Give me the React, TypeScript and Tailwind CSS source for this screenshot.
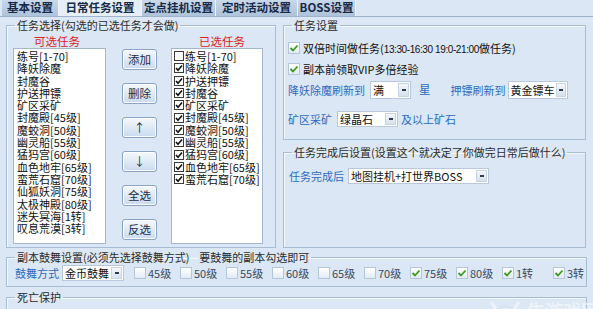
import type { FC, ReactNode } from "react";

const available = [
  "练号[1-70]",
  "降妖除魔",
  "封魔谷",
  "护送押镖",
  "矿区采矿",
  "封魔殿[45级]",
  "魔蛟洞[50级]",
  "幽灵船[55级]",
  "猛犸宫[60级]",
  "血色地牢[65级]",
  "蛮荒石窟[70级]",
  "仙狐妖洞[75级]",
  "太极神殿[80级]",
  "迷失冥海[1转]",
  "叹息荒漠[3转]",
];

const selected = [
  { name: "练号[1-70]", on: false },
  { name: "降妖除魔", on: true },
  { name: "护送押镖", on: true },
  { name: "封魔谷", on: true },
  { name: "矿区采矿", on: true },
  { name: "封魔殿[45级]", on: true },
  { name: "魔蛟洞[50级]", on: true },
  { name: "幽灵船[55级]", on: true },
  { name: "猛犸宫[60级]", on: true },
  { name: "血色地牢[65级]", on: true },
  { name: "蛮荒石窟[70级]", on: true },
];

const levels = [
  { label: "45级", on: false },
  { label: "50级", on: false },
  { label: "55级", on: false },
  { label: "60级", on: false },
  { label: "65级", on: false },
  { label: "70级", on: false },
  { label: "75级", on: true },
  { label: "80级", on: true },
  { label: "1转", on: true },
];

const tabs = [
  { label: "基本设置", w: "w-[57px]" },
  { label: "日常任务设置", w: "w-[83px]", active: true },
  { label: "定点挂机设置", w: "w-[74px]" },
  { label: "定时活动设置", w: "w-[82px]" },
  { label: "BOSS设置", w: "w-[58px]" },
];

const GreenCheck: FC<{ on?: boolean }> = ({ on }) => (
  <span className="flex h-[12px] w-[12px] shrink-0 items-center justify-center border border-[#b4c6da] bg-gradient-to-b from-white to-[#e3ebf4]">
    {on && (
      <svg width="10" height="10" viewBox="0 0 10 10">
        <path d="M1.5 5 L4 7.5 L8.5 2.5" fill="none" stroke="#3f9a1e" strokeWidth="1.8" />
      </svg>
    )}
  </span>
);

const ListCheck: FC<{ on?: boolean }> = ({ on }) => (
  <span className="mr-[1px] flex h-[10px] w-[10px] shrink-0 items-center justify-center border border-[#3a3a3a] bg-white">
    {on && (
      <svg width="8" height="8" viewBox="0 0 8 8">
        <path d="M1 4 L3 6.3 L7 1.5" fill="none" stroke="#111" strokeWidth="1.6" />
      </svg>
    )}
  </span>
);

const Select: FC<{ text: string; w: string; h?: string }> = ({ text, w, h = "h-[17px]" }) => (
  <div className={`flex ${w} ${h} shrink-0 items-stretch border border-[#b9c9db] bg-white`}>
    <span className="flex flex-1 items-center whitespace-nowrap pl-[2px] text-[11px] leading-[14px] text-[#111]">
      {text}
    </span>
    <span className="m-[1px] flex w-[11px] items-center justify-center border border-[#c7d4e3] bg-gradient-to-b from-[#f4f7fb] to-[#d6e1ee]">
      <span className="h-[2px] w-[4px] bg-[#2d3c50]" />
    </span>
  </div>
);

const Button: FC<{ children: ReactNode }> = ({ children }) => (
  <div className="flex h-[21px] w-[35px] items-center justify-center rounded-[3px] border border-[#8aa4c4] bg-gradient-to-b from-[#f5f8fc] to-[#cadbee] text-[11.5px] leading-none text-[#1b2d4a] shadow-[inset_0_0_0_1px_#ffffff]">
    {children}
  </div>
);

const Group: FC<{ legend: string; className: string; children?: ReactNode }> = ({ legend, className, children }) => (
  <fieldset className={`border border-[#a8bdd4] shadow-[inset_1px_1px_0_#f4f8fc] ${className}`}>
    <legend className="ml-[8px] whitespace-pre px-[2px] text-[11px] leading-[14px] text-[#2b2b2b]">{legend}</legend>
    {children}
  </fieldset>
);

const Blue: FC<{ children: ReactNode }> = ({ children }) => (
  <span className="whitespace-nowrap text-[11px] text-[#2c6cbf]">{children}</span>
);

const App: FC = () => {
  return (
    <div className="relative h-[309px] w-[593px] overflow-hidden bg-[#dbe7f4] font-['Noto_Sans_CJK_SC',sans-serif] text-[#111]">
      <div className="flex h-[17px] items-end border-b border-[#9fb4cc] pl-[2px]">
        {tabs.map((tab) => (
          <div
            key={tab.label}
            className={`flex items-center justify-center whitespace-nowrap border-r border-[#eef3f9] text-[11.5px] font-bold leading-none text-[#162a47] ${tab.w} ${
              tab.active
                ? "h-[17px] bg-[#e6eef7]"
                : "h-[16px] bg-gradient-to-b from-[#c9d8ea] to-[#aec2d9]"
            }`}
          >
            {tab.label}
          </div>
        ))}
      </div>

      <div className="flex pt-[1px]">
        <Group legend="任务选择(勾选的已选任务才会做)" className="ml-[6px] h-[230px] w-[270px]">
          <div className="mt-[3px] flex h-[13px] text-[11.5px] leading-[13px] text-[#e0221d]">
            <span className="ml-[27px]">可选任务</span>
            <span className="ml-[119px]">已选任务</span>
          </div>
          <div className="flex pl-[6px]">
            <div className="h-[196px] w-[93px] overflow-hidden border border-[#a3b6cc] bg-white pl-[3px] pt-[1px] text-[11px]">
              {available.map((item) => (
                <div key={item} className="h-[12.3px] whitespace-nowrap leading-[12.3px]">
                  {item}
                </div>
              ))}
            </div>
            <div className="ml-[16px] flex flex-col gap-[13px] pt-[1px]">
              <Button>添加</Button>
              <Button>删除</Button>
              <Button>↑</Button>
              <Button>↓</Button>
              <Button>全选</Button>
              <Button>反选</Button>
            </div>
            <div className="ml-[14px] h-[196px] w-[92px] overflow-hidden border border-[#a3b6cc] bg-white pl-[2px] pt-[1px] text-[11px]">
              {selected.map((item) => (
                <div key={item.name} className="flex h-[12.3px] items-center whitespace-nowrap leading-[12.3px]">
                  <ListCheck on={item.on} />
                  {item.name}
                </div>
              ))}
            </div>
          </div>
        </Group>

        <div className="ml-[7px] flex w-[303px] flex-col">
          <Group legend="任务设置" className="h-[122px]">
            <div className="flex flex-col pl-[4px] text-[11px]">
              <div className="mt-[9px] flex h-[14px] items-center gap-[3px] whitespace-nowrap">
                <GreenCheck on />
                <span>
                  双倍时间做任务(
                  <span className="font-['Liberation_Sans',sans-serif] text-[10px] tracking-[-0.4px]">
                    13:30-16:30 19:0-21:00
                  </span>
                  做任务)
                </span>
              </div>
              <div className="mt-[7px] flex h-[14px] items-center gap-[3px]">
                <GreenCheck on />
                <span>副本前领取VIP多倍经验</span>
              </div>
              <div className="mt-[5px] flex h-[18px] items-center">
                <Blue>降妖除魔刷新到</Blue>
                <span className="ml-[5px]">
                  <Select text="满" w="w-[41px]" h="h-[18px]" />
                </span>
                <span className="ml-[8px] text-[11.5px] text-[#2c6cbf]">星</span>
                <span className="ml-[20px]">
                  <Blue>押镖刷新到</Blue>
                </span>
                <span className="ml-[2px]">
                  <Select text="黄金镖车" w="w-[60px]" h="h-[18px]" />
                </span>
              </div>
              <div className="mt-[12px] flex h-[16px] items-center">
                <Blue>矿区采矿</Blue>
                <span className="ml-[5px]">
                  <Select text="绿晶石" w="w-[61px]" h="h-[16px]" />
                </span>
                <span className="ml-[3px]">
                  <Blue>及以上矿石</Blue>
                </span>
              </div>
            </div>
          </Group>

          <Group legend="任务完成后设置(设置这个就决定了你做完日常后做什么)" className="mt-[5px] h-[103px]">
            <div className="mt-[9px] flex h-[16px] items-center pl-[5px]">
              <Blue>任务完成后</Blue>
              <span className="ml-[4px]">
                <Select text="地图挂机+打世界BOSS" w="w-[141px]" h="h-[16px]" />
              </span>
            </div>
          </Group>
        </div>
      </div>

      <Group
        legend="副本鼓舞设置(必须先选择鼓舞方式)    要鼓舞的副本勾选即可"
        className="ml-[6px] mt-[2px] h-[37px] w-[581px]"
      >
        <div className="mt-[1px] flex h-[16px] items-center pl-[8px]">
          <Blue>鼓舞方式</Blue>
          <span className="ml-[3px]">
            <Select text="金币鼓舞" w="w-[62px]" h="h-[16px]" />
          </span>
          <div className="ml-[10px] flex">
            {levels.map((lv) => (
              <div key={lv.label} className="flex w-[46px] items-center gap-[2px] whitespace-nowrap text-[11px] text-[#3a4a60]">
                <GreenCheck on={lv.on} />
                <span>{lv.label}</span>
              </div>
            ))}
            <div className="ml-[5px] flex items-center gap-[2px] whitespace-nowrap text-[11px] text-[#3a4a60]">
              <GreenCheck on />
              <span>3转</span>
            </div>
          </div>
        </div>
      </Group>

      <Group legend="死亡保护" className="ml-[6px] mt-[3px] h-[30px] w-[581px]" />

      <div className="absolute bottom-[-12px] right-[-6px] flex items-center gap-[4px] opacity-50">
        <svg width="36" height="22" viewBox="0 0 36 22">
          <path d="M4 3 L9 10 M32 3 L27 10" stroke="#ffffff" strokeWidth="3" fill="none" />
          <circle cx="18" cy="19" r="11" fill="#f3f6fa" stroke="#c9d6e4" />
        </svg>
        <span className="whitespace-nowrap text-[18px] font-bold leading-none text-white">牛游戏网</span>
      </div>
    </div>
  );
};

export default App;
